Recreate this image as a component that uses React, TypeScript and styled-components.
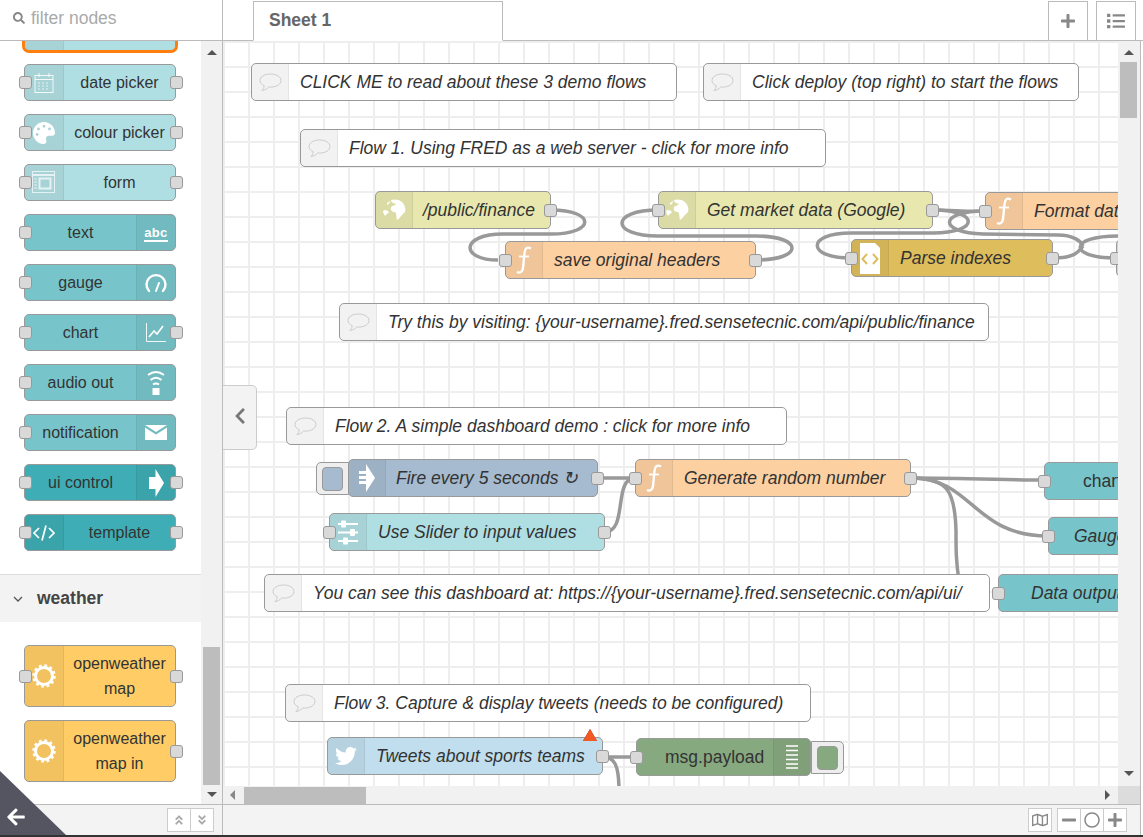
import React from 'react';
import styled, { createGlobalStyle, css } from 'styled-components';
import {
  FaAngleDoubleDown,
  FaAngleDoubleUp,
  FaArrowLeft,
  FaChevronLeft,
  FaList,
  FaMinus,
  FaPalette,
  FaPlus,
  FaRegCircle,
  FaRegMap,
  FaSearch,
  FaTwitter,
} from 'react-icons/fa';

const GlobalStyle = createGlobalStyle`
  html, body {
    margin: 0;
    padding: 0;
    height: 100%;
    overflow: hidden;
    background: #fff;
  }
  body {
    font-family: "Liberation Sans", Arial, sans-serif;
    color: #333;
  }
  * {
    box-sizing: border-box;
  }
`;

const Page = styled.div`
  width: 1143px;
  height: 837px;
  display: flex;
  flex-direction: column;
  border-bottom: 2px solid #333;
  position: relative;
  overflow: hidden;
`;

const Header = styled.div`
  height: 41px;
  display: flex;
  flex: none;
`;

const FilterBox = styled.div`
  width: 223px;
  flex: none;
  display: flex;
  align-items: center;
  gap: 6px;
  padding: 0 0 4px 13px;
  border-right: 1px solid #bbb;
  border-bottom: 1px solid #bbb;
  font-size: 17.5px;
  color: #aaa;
  svg {
    color: #888;
    font-size: 12px;
  }
`;

const TabBar = styled.div`
  flex: 1;
  display: flex;
  padding: 1px 7px 0 30px;
  border-bottom: 1px solid #bbb;
`;

const Tab = styled.div`
  width: 250px;
  height: 40px;
  background: #fff;
  border: 1px solid #bbb;
  border-bottom: 1px solid #fff;
  padding: 0 0 2px 15px;
  display: flex;
  align-items: center;
  font-size: 17.5px;
  font-weight: bold;
  color: #666;
`;

const TabButton = styled.div<{ $gap?: number }>`
  width: 40px;
  height: 39px;
  margin-left: ${(p) => p.$gap ?? 0}px;
  border: 1px solid #bbb;
  border-bottom: none;
  display: flex;
  align-items: center;
  justify-content: center;
  color: #888;
  font-size: 16px;
`;

const Body = styled.div`
  flex: 1;
  min-height: 0;
  display: flex;
`;

const Palette = styled.div`
  width: 223px;
  flex: none;
  display: flex;
  flex-direction: column;
  border-right: 1px solid #bbb;
`;

const PaletteMain = styled.div`
  flex: 1;
  min-height: 0;
  display: flex;
`;

const PaletteScroll = styled.div`
  flex: 1;
  min-width: 0;
  overflow: hidden;
`;

const NodeList = styled.div<{ $top: number; $bottom: number }>`
  display: flex;
  flex-direction: column;
  gap: 13px;
  padding: 0 25px ${(p) => p.$bottom}px 24px;
  margin-top: ${(p) => p.$top}px;
`;

const SectionHeader = styled.div`
  height: 48px;
  display: flex;
  align-items: center;
  gap: 14px;
  padding-left: 13px;
  background: #f3f3f3;
  border-top: 1px solid #ddd;
  font-size: 17.5px;
  font-weight: bold;
  color: #444;
`;

const VScrollbar = styled.div<{ $width: number; $end: number }>`
  width: ${(p) => p.$width}px;
  flex: none;
  background: #f1f1f1;
  display: flex;
  flex-direction: column;
  align-items: center;
  justify-content: space-between;
  position: relative;
  padding: 9px 0 ${(p) => p.$end}px;
`;

const ThumbV = styled.div<{ $top: number; $height: number }>`
  position: absolute;
  left: 2px;
  width: 17px;
  top: ${(p) => p.$top}px;
  height: ${(p) => p.$height}px;
  background: #bdbdbd;
`;

const Arrow = styled.div<{ $dir: 'up' | 'down' | 'left' | 'right' }>`
  width: 0;
  height: 0;
  border-style: solid;
  ${(p) =>
    p.$dir === 'up' &&
    css`
      border-width: 0 5px 5px 5px;
      border-color: transparent transparent #555 transparent;
    `}
  ${(p) =>
    p.$dir === 'down' &&
    css`
      border-width: 5px 5px 0 5px;
      border-color: #555 transparent transparent transparent;
    `}
  ${(p) =>
    p.$dir === 'left' &&
    css`
      border-width: 5px 5px 5px 0;
      border-color: transparent #888 transparent transparent;
    `}
  ${(p) =>
    p.$dir === 'right' &&
    css`
      border-width: 5px 0 5px 5px;
      border-color: transparent transparent transparent #555;
    `}
`;

const Footer = styled.div<{ $pad: number }>`
  height: 31px;
  flex: none;
  background: #f3f3f3;
  border-top: 1px solid #bbb;
  display: flex;
  align-items: center;
  justify-content: flex-end;
  gap: 6px;
  padding-right: ${(p) => p.$pad}px;
`;

const ButtonGroup = styled.div`
  display: flex;
`;

const FooterButton = styled.div<{ $light?: boolean }>`
  width: 24px;
  height: 24px;
  margin-right: -1px;
  background: #fff;
  border: 1px solid #ccc;
  display: flex;
  align-items: center;
  justify-content: center;
  color: ${(p) => (p.$light ? '#aaa' : '#888')};
  font-size: ${(p) => (p.$light ? 12 : 16)}px;
`;

const CornerFlap = styled.div`
  position: absolute;
  left: 0;
  bottom: 0;
  width: 66px;
  height: 64px;
  background: #555562;
  clip-path: polygon(0 0, 100% 100%, 0 100%);
  color: #fff;
  font-size: 20px;
  svg {
    position: absolute;
    left: 6px;
    bottom: 8px;
  }
`;

const Workspace = styled.div`
  flex: 1;
  min-width: 0;
  display: flex;
  flex-direction: column;
  margin-right: 2px;
  border-right: 1px solid #bbb;
`;

const WorkspaceMain = styled.div`
  flex: 1;
  min-height: 0;
  display: flex;
`;

const CanvasColumn = styled.div`
  flex: 1;
  min-width: 0;
  display: flex;
  flex-direction: column;
`;

/* page x = canvas x + 223, page y = canvas y + 41 */
const Canvas = styled.div`
  flex: 1;
  min-height: 0;
  position: relative;
  overflow: hidden;
  background-color: #fff;
  background-image: linear-gradient(#eee 2px, transparent 2px),
    linear-gradient(90deg, #eee 2px, transparent 2px);
  background-size: 25px 25px;
  background-position: 0 0;
`;

const HScrollbar = styled.div`
  height: 18px;
  flex: none;
  background: #f1f1f1;
  display: flex;
  align-items: center;
  justify-content: space-between;
  padding: 0 8px 0 7px;
  position: relative;
`;

const ThumbH = styled.div`
  position: absolute;
  left: 21px;
  top: 1px;
  bottom: 0;
  width: 122px;
  background: #bdbdbd;
`;

const ScrollCorner = styled.div`
  height: 18px;
  flex: none;
  background: #dcdcdc;
`;

const SideColumn = styled.div`
  width: 22px;
  flex: none;
  display: flex;
  flex-direction: column;
  background: #f1f1f1;
`;

const SideTrack = styled(VScrollbar)`
  flex: 1;
  width: auto;
`;

const SideHandle = styled.div`
  position: absolute;
  left: 0;
  top: 344px;
  width: 34px;
  height: 65px;
  background: #f3f3f3;
  border: 1px solid #ccc;
  border-left: none;
  border-radius: 0 5px 5px 0;
  display: flex;
  align-items: center;
  justify-content: center;
  color: #777;
  font-size: 18px;
  padding-bottom: 4px;
  z-index: 5;
`;

const Wires = styled.svg`
  position: absolute;
  left: 0;
  top: 0;
  width: 100%;
  height: 100%;
`;

const Wire = styled.path`
  fill: none;
  stroke: #999;
  stroke-width: 3.5;
`;

const Placed = styled.div<{ $x: number; $y: number; $w: number }>`
  position: absolute;
  left: ${(p) => p.$x}px;
  top: ${(p) => p.$y}px;
  width: ${(p) => p.$w}px;
`;

const NodeBody = styled.div<{ $color: string; $h: number; $selected?: boolean }>`
  position: relative;
  height: ${(p) => p.$h}px;
  width: 100%;
  flex: none;
  display: flex;
  background: ${(p) => p.$color};
  border: 1px solid #999;
  border-radius: 5px;
  ${(p) =>
    p.$selected &&
    css`
      border-color: #ff7f0e;
      box-shadow: 0 0 0 2px #ff7f0e;
    `}
`;

const IconBox = styled.div<{ $side: 'left' | 'right'; $w: number }>`
  width: ${(p) => p.$w}px;
  flex: none;
  order: ${(p) => (p.$side === 'left' ? 0 : 2)};
  background: rgba(0, 0, 0, 0.05);
  border-${(p) => (p.$side === 'left' ? 'right' : 'left')}: 1px solid rgba(0, 0, 0, 0.06);
  border-radius: ${(p) => (p.$side === 'left' ? '4px 0 0 4px' : '0 4px 4px 0')};
  display: flex;
  align-items: center;
  justify-content: center;
  color: #fff;
  font-size: 22px;
`;

const Label = styled.div`
  flex: 1;
  min-width: 0;
  order: 1;
  display: flex;
  align-items: center;
  justify-content: center;
  text-align: center;
  line-height: 25px;
  white-space: nowrap;
  font-size: 16px;
  color: #333;
`;

const CanvasLabel = styled(Label)<{ $pad: number; $italic?: boolean }>`
  justify-content: flex-start;
  padding-left: ${(p) => p.$pad}px;
  font-size: 17.5px;
  font-style: ${(p) => (p.$italic ? 'italic' : 'normal')};
`;

const Port = styled.div<{ $side: 'left' | 'right'; $offset: number }>`
  position: absolute;
  top: 50%;
  ${(p) => p.$side}: ${(p) => p.$offset}px;
  width: 13px;
  height: 13px;
  margin-top: -6.5px;
  background: #d9d9d9;
  border: 1px solid #999;
  border-radius: 3px;
  z-index: 2;
`;

const InjectButton = styled.div<{ $x: number; $y: number; $color: string; $side: 'left' | 'right' }>`
  position: absolute;
  left: ${(p) => p.$x}px;
  top: ${(p) => p.$y}px;
  width: 33px;
  height: 33px;
  background: #eee;
  border: 1px solid #999;
  border-radius: ${(p) => (p.$side === 'left' ? '5px 0 0 5px' : '0 5px 5px 0')};
  display: flex;
  align-items: center;
  justify-content: ${(p) => (p.$side === 'left' ? 'flex-start' : 'flex-end')};
  padding: 0 5px;
  &::after {
    content: '';
    width: 21px;
    height: 22px;
    border-radius: 4px;
    border: 1px solid #999;
    background: ${(p) => p.$color};
  }
`;

const WarningBadge = styled.div`
  position: absolute;
  left: 360px;
  top: 688px;
  width: 0;
  height: 0;
  border-style: solid;
  border-width: 0 7px 12px 7px;
  border-color: transparent transparent #f15a22 transparent;
  filter: drop-shadow(0 0 0.5px #800);
`;

const AbcGlyph = styled.div`
  display: flex;
  flex-direction: column;
  align-items: center;
  font-size: 13px;
  font-weight: bold;
  line-height: 12px;
  letter-spacing: 0.3px;
  border-bottom: 2px solid #fff;
  padding-bottom: 1px;
  margin-top: 3px;
`;

const Chevron = () => (
  <svg width="10" height="10" viewBox="0 0 10 10">
    <path d="M1 3 L5 7 L9 3" fill="none" stroke="#555" strokeWidth="1.3" />
  </svg>
);

const CalendarIcon = () => (
  <svg width="20" height="20" viewBox="0 0 20 20" fill="none" stroke="#fff" strokeOpacity="0.85">
    <rect x="1" y="2.5" width="18" height="17" />
    <path d="M1 6.5 H19 M5 0 V4 M15 0 V4" />
    <path d="M4 10 H16 M4 13 H16 M4 16 H16" strokeDasharray="2 2" strokeOpacity="0.7" />
  </svg>
);

const FormIcon = () => (
  <svg width="24" height="23" viewBox="0 0 24 23" fill="none" stroke="#fff" strokeOpacity="0.7">
    <rect x="0.5" y="0.5" width="22" height="21" />
    <path d="M1 4 H22" strokeWidth="2" />
    <rect x="7.5" y="7.5" width="11" height="10" strokeWidth="2" />
    <path d="M2 8 H5 M2 11 H5 M2 14 H5 M2 17 H5" />
  </svg>
);

const GaugeIcon = () => (
  <svg width="22" height="20" viewBox="0 0 22 20" fill="none" stroke="#fff" strokeWidth="2.4" strokeLinecap="round">
    <path d="M4 18 A9.5 9.5 0 1 1 18 18" />
    <path d="M11 18 L14 10" strokeWidth="2" />
  </svg>
);

const ChartIcon = () => (
  <svg width="20" height="20" viewBox="0 0 20 20" fill="none" stroke="#fff">
    <path d="M0.5 0 V18.5 H20" strokeOpacity="0.9" />
    <path d="M3 14 L8 8 L11 11 L17 3" strokeWidth="1.6" />
  </svg>
);

const AudioIcon = () => (
  <svg width="18" height="26" viewBox="0 0 18 26" fill="none" stroke="#fff" strokeWidth="2">
    <path d="M1 5 Q9 -1 17 5" />
    <path d="M3.5 10 Q9 5.5 14.5 10" />
    <path d="M6 14.5 Q9 12.5 12 14.5" />
    <rect x="5.5" y="18" width="7" height="7" fill="#fff" stroke="none" />
  </svg>
);

const MailIcon = () => (
  <svg width="22" height="15" viewBox="0 0 22 15">
    <path d="M0 0 H22 L11 7 Z M0 2.5 L11 9.5 L22 2.5 V15 H0 Z" fill="#fff" />
  </svg>
);

const ControlIcon = () => (
  <svg width="15" height="28" viewBox="0 0 15 28">
    <path d="M0 8 H6.5 V0 L15 14 L6.5 28 V20 H0 Z" fill="#fff" />
  </svg>
);

const CodeIcon = () => (
  <svg width="22" height="16" viewBox="0 0 22 16" fill="none" stroke="#fff" strokeWidth="1.7">
    <path d="M6 3 L1 8 L6 13 M16 3 L21 8 L16 13 M13 0.5 L9 15.5" />
  </svg>
);

const SunIcon = () => (
  <svg width="24" height="24" viewBox="0 0 24 24" fill="none" stroke="#fff">
    <circle cx="12" cy="12" r="8.5" strokeWidth="3" />
    <circle cx="12" cy="12" r="10.5" strokeWidth="2.5" strokeDasharray="2.75 2.75" />
  </svg>
);

const GlobeIcon = () => (
  <svg width="24" height="24" viewBox="0 0 24 24" fill="#fff">
    <path d="M9 2 C12 1 17 1 20 4 C23 7 24 11 23 14 L20 17 C18 19 17 21 15 22 C14 19 15 16 13 14 C10 14 8 12 9 9 C11 7 13 8 14 6 C12 5 9 5 9 2 Z" />
    <path d="M1 13 C3 11 5 12 7 14 C6 16 4 16 3 18 C2 16 1 15 1 13 Z" />
    <path d="M5 5 L8 3 C8 5 7 6 5 7 Z" />
  </svg>
);

const FunctionIcon = () => (
  <svg width="16" height="28" viewBox="0 0 16 28" fill="none" stroke="#fff" strokeWidth="2.4">
    <path d="M15 2.5 C11 0.5 9 2 8.5 7 L7 22 C6.5 26 4 27.5 1 26" />
    <path d="M3 10.5 H13" strokeWidth="1.8" />
  </svg>
);

const ParseIcon = () => (
  <svg width="20" height="31" viewBox="0 0 20 31">
    <path d="M0 0 H15 L20 5 V31 H0 Z" fill="#fff" />
    <path d="M7 11 L2.5 16 L7 21 M13 11 L17.5 16 L13 21" fill="none" stroke="#debd5c" strokeWidth="2" />
  </svg>
);

const InjectIcon = () => (
  <svg width="16" height="28" viewBox="0 0 16 28">
    <path d="M7 0 L16 14 L7 28 V20 H0 V17 H7 V15 H0 V12 H7 V10 H0 V7 H7 Z" fill="#fff" />
  </svg>
);

const SliderIcon = () => (
  <svg width="20" height="25" viewBox="0 0 20 25" fill="#fff">
    <rect x="0" y="3" width="20" height="2" />
    <rect x="0" y="11.5" width="20" height="2" />
    <rect x="0" y="20" width="20" height="2" />
    <rect x="3" y="0.5" width="5" height="7" rx="1" />
    <rect x="12" y="9" width="5" height="7" rx="1" />
    <rect x="5" y="17.5" width="5" height="7" rx="1" />
  </svg>
);

const DebugIcon = () => (
  <svg width="14" height="24" viewBox="0 0 14 24" stroke="#fff" strokeWidth="1.4">
    <path d="M1 1 H13 M1 5.5 H13 M1 10 H13 M1 14.5 H13 M1 19 H13 M1 23 H13" />
  </svg>
);

const CommentIcon = () => (
  <svg width="23" height="19" viewBox="0 0 23 19" fill="none" stroke="#ccc">
    <path d="M11.5 1 C5.5 1 1 3.8 1 7.5 C1 9.8 2.7 11.6 5.2 12.7 C5.2 14.5 4.3 16.3 2.9 17.5 C5.8 17.2 8.1 15.8 9.6 14 C10.2 14 10.9 14.1 11.5 14.1 C17.5 14.1 22 11.2 22 7.5 C22 3.8 17.5 1 11.5 1 Z" />
  </svg>
);

type Side = 'left' | 'right';

function PaletteNode({
  label,
  color,
  icon,
  side = 'left',
  inPort = true,
  outPort = true,
  h = 37,
  selected,
}: {
  label?: React.ReactNode;
  color: string;
  icon?: React.ReactNode;
  side?: Side;
  inPort?: boolean;
  outPort?: boolean;
  h?: number;
  selected?: boolean;
}) {
  return (
    <NodeBody $color={color} $h={h} $selected={selected}>
      <IconBox $side={side} $w={39}>
        {icon}
      </IconBox>
      <Label>{label}</Label>
      {inPort && <Port $side="left" $offset={-6} />}
      {outPort && <Port $side="right" $offset={-8} />}
    </NodeBody>
  );
}

function FlowNode({
  x,
  y,
  w,
  label,
  color,
  icon,
  side = 'left',
  pad,
  italic = true,
  inPort,
  outPort,
}: {
  x: number;
  y: number;
  w: number;
  label: React.ReactNode;
  color: string;
  icon?: React.ReactNode;
  side?: Side;
  pad: number;
  italic?: boolean;
  inPort?: boolean;
  outPort?: boolean;
}) {
  return (
    <Placed $x={x} $y={y} $w={w}>
      <NodeBody $color={color} $h={38}>
        <IconBox $side={side} $w={37}>
          {icon}
        </IconBox>
        <CanvasLabel $italic={italic} $pad={pad}>
          {label}
        </CanvasLabel>
        {inPort && <Port $side="left" $offset={-7} />}
        {outPort && <Port $side="right" $offset={-7} />}
      </NodeBody>
    </Placed>
  );
}

function Comment({ x, y, w, text }: { x: number; y: number; w: number; text: string }) {
  return (
    <Placed $x={x} $y={y} $w={w}>
      <NodeBody $color="#fff" $h={38}>
        <IconBox $side="left" $w={37}>
          <CommentIcon />
        </IconBox>
        <CanvasLabel $italic $pad={11}>
          {text}
        </CanvasLabel>
      </NodeBody>
    </Placed>
  );
}

const DASH_LIGHT = '#b0dfe3';
const DASH = '#77c5cb';
const DASH_DARK = '#3fadb5';
const WEATHER = '#ffcc66';
const HTTP = '#e7e7ae';
const FUNC = '#fdd0a2';

// wire paths in canvas coordinates (page coords minus 223, 41)
const wirePaths = [
  'M328 169 C373 169 373 193 328 193 L280 193 C237 193 237 219 275 219',
  'M533 219 C581 219 581 195 533 195 L435 195 C387 195 387 169 435 169',
  'M710 169 C757 169 757 192 710 192 L628 192 C583 192 583 217 628 217',
  'M762 170 C715 170 715 192 760 193 L835 194 C850 194 858 200 860 205',
  'M830 217 C850 217 855 212 860 205',
  'M895 195 C845 195 845 217 893 217',
  'M710 169 C730 169 745 171 762 170',
  'M375 437 L412 437',
  'M382 491 C405 491 390 437 412 437',
  'M688 437 C740 437 790 439 821 439',
  'M688 437 C750 437 750 495 825 495',
  'M688 437 C725 437 732 450 733 490 C733 510 733 520 736 540',
  'M380 716 L413 716',
  'M380 716 C392 716 396 725 396 750',
];

export default function App() {
  return (
    <Page>
      <GlobalStyle />
      <Header>
        <FilterBox>
          <FaSearch />
          filter nodes
        </FilterBox>
        <TabBar>
          <Tab>Sheet 1</Tab>
          <TabButton $gap={545}>
            <FaPlus />
          </TabButton>
          <TabButton $gap={8}>
            <FaList size={18} />
          </TabButton>
        </TabBar>
      </Header>
      <Body>
        <Palette>
          <PaletteMain>
            <PaletteScroll>
              <NodeList $top={-27} $bottom={23}>
                <PaletteNode color={DASH_LIGHT} selected inPort={false} outPort={false} />
                <PaletteNode color={DASH_LIGHT} label="date picker" icon={<CalendarIcon />} />
                <PaletteNode color={DASH_LIGHT} label="colour picker" icon={<FaPalette />} />
                <PaletteNode color={DASH_LIGHT} label="form" icon={<FormIcon />} />
                <PaletteNode color={DASH} label="text" side="right" outPort={false} icon={<AbcGlyph>abc</AbcGlyph>} />
                <PaletteNode color={DASH} label="gauge" side="right" outPort={false} icon={<GaugeIcon />} />
                <PaletteNode color={DASH} label="chart" side="right" icon={<ChartIcon />} />
                <PaletteNode color={DASH} label="audio out" side="right" outPort={false} icon={<AudioIcon />} />
                <PaletteNode color={DASH} label="notification" side="right" outPort={false} icon={<MailIcon />} />
                <PaletteNode color={DASH_DARK} label="ui control" side="right" icon={<ControlIcon />} />
                <PaletteNode color={DASH_DARK} label="template" icon={<CodeIcon />} />
              </NodeList>
              <SectionHeader>
                <Chevron />
                weather
              </SectionHeader>
              <NodeList $top={23} $bottom={0}>
                <PaletteNode
                  color={WEATHER}
                  h={62}
                  icon={<SunIcon />}
                  label={
                    <span>
                      openweather
                      <br />
                      map
                    </span>
                  }
                />
                <PaletteNode
                  color={WEATHER}
                  h={62}
                  inPort={false}
                  icon={<SunIcon />}
                  label={
                    <span>
                      openweather
                      <br />
                      map in
                    </span>
                  }
                />
              </NodeList>
            </PaletteScroll>
            <VScrollbar $width={21} $end={7}>
              <Arrow $dir="up" />
              <ThumbV $top={606} $height={138} />
              <Arrow $dir="down" />
            </VScrollbar>
          </PaletteMain>
          <Footer $pad={9}>
            <ButtonGroup>
              <FooterButton $light>
                <FaAngleDoubleUp />
              </FooterButton>
              <FooterButton $light>
                <FaAngleDoubleDown />
              </FooterButton>
            </ButtonGroup>
          </Footer>
        </Palette>
        <Workspace>
          <WorkspaceMain>
            <CanvasColumn>
              <Canvas>
                <SideHandle>
                  <FaChevronLeft />
                </SideHandle>
                <Wires>
                  {wirePaths.map((d) => (
                    <Wire key={d} d={d} />
                  ))}
                </Wires>

                <Comment x={28} y={22} w={426} text="CLICK ME to read about these 3 demo flows" />
                <Comment x={480} y={22} w={376} text="Click deploy (top right) to start the flows" />
                <Comment x={77} y={88} w={526} text="Flow 1. Using FRED as a web server - click for more info" />

                <FlowNode x={152} y={150} w={176} color={HTTP} pad={10} outPort label="/public/finance" icon={<GlobeIcon />} />
                <FlowNode x={282} y={200} w={251} color={FUNC} pad={11} inPort outPort label="save original headers" icon={<FunctionIcon />} />
                <FlowNode x={435} y={150} w={275} color={HTTP} pad={11} inPort outPort label="Get market data (Google)" icon={<GlobeIcon />} />
                <FlowNode x={762} y={151} w={260} color={FUNC} pad={11} inPort label="Format data" icon={<FunctionIcon />} />
                <FlowNode x={628} y={198} w={202} color="#debd5c" pad={11} inPort outPort label="Parse indexes" icon={<ParseIcon />} />
                <FlowNode x={893} y={198} w={100} color={HTTP} pad={11} inPort label="" icon={null} />

                <Comment x={116} y={262} w={650} text="Try this by visiting: {your-username}.fred.sensetecnic.com/api/public/finance" />
                <Comment x={63} y={366} w={501} text="Flow 2. A simple dashboard demo : click for more info" />

                <InjectButton $x={93} $y={421} $color="#a6bbcf" $side="left" />
                <FlowNode x={125} y={418} w={250} color="#a6bbcf" pad={10} outPort label="Fire every 5 seconds ↻" icon={<InjectIcon />} />
                <FlowNode x={412} y={418} w={276} color={FUNC} pad={11} inPort outPort label="Generate random number" icon={<FunctionIcon />} />
                <FlowNode x={106} y={472} w={276} color={DASH_LIGHT} pad={11} inPort outPort label="Use Slider to input values" icon={<SliderIcon />} />
                <FlowNode x={821} y={421} w={152} color={DASH} pad={38} italic={false} inPort side="right" label="chart" icon={<ChartIcon />} />
                <FlowNode x={825} y={476} w={152} color={DASH} pad={25} inPort side="right" label="Gauge" icon={<GaugeIcon />} />

                <Comment x={41} y={533} w={726} text="You can see this dashboard at: https://{your-username}.fred.sensetecnic.com/api/ui/" />
                <FlowNode x={775} y={533} w={240} color={DASH} pad={32} inPort side="right" label="Data output" icon={<DebugIcon />} />

                <Comment x={62} y={643} w={526} text="Flow 3. Capture & display tweets (needs to be configured)" />
                <FlowNode x={104} y={696} w={276} color="#c0deed" pad={11} outPort label="Tweets about sports teams" icon={<FaTwitter />} />
                <WarningBadge />
                <FlowNode x={413} y={697} w={175} color="#87a980" pad={28} italic={false} inPort side="right" label="msg.payload" icon={<DebugIcon />} />
                <InjectButton $x={588} $y={700} $color="#87a980" $side="right" />
              </Canvas>
              <HScrollbar>
                <Arrow $dir="left" />
                <ThumbH />
                <Arrow $dir="right" />
              </HScrollbar>
            </CanvasColumn>
            <SideColumn>
              <SideTrack $width={22} $end={10}>
                <Arrow $dir="up" />
                <ThumbV $top={21} $height={56} />
                <Arrow $dir="down" />
              </SideTrack>
              <ScrollCorner />
            </SideColumn>
          </WorkspaceMain>
          <Footer $pad={14}>
            <FooterButton>
              <FaRegMap />
            </FooterButton>
            <ButtonGroup>
              <FooterButton>
                <FaMinus />
              </FooterButton>
              <FooterButton>
                <FaRegCircle />
              </FooterButton>
              <FooterButton>
                <FaPlus />
              </FooterButton>
            </ButtonGroup>
          </Footer>
        </Workspace>
      </Body>
      <CornerFlap>
        <FaArrowLeft />
      </CornerFlap>
    </Page>
  );
}
